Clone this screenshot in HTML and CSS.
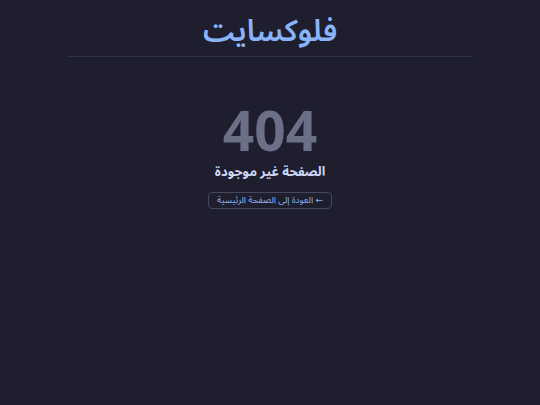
FILE: index.html
```html
<!DOCTYPE html>
<html lang="ar" dir="rtl">
<head>
<meta charset="utf-8">
<title>404</title>
<link rel="stylesheet" href="styles.css">
</head>
<body>
<div class="wrap">
  <header class="header">
    <a class="logo" href="#">فلوكسايت</a>
  </header>
  <main class="notfound">
    <div class="code">404</div>
    <h1 class="title">الصفحة غير موجودة</h1>
    <a class="back" href="#"><span class="arrow">←</span> العودة إلى الصفحة الرئيسية</a>
  </main>
</div>
</body>
</html>
```
FILE: styles.css
```css
html, body {
  margin: 0;
  padding: 0;
  background: #1e1e2e;
  color: #cdd6f4;
  font-family: "Noto Sans Arabic", "Noto Sans", sans-serif;
}
.wrap {
  width: 405px;
  margin: 0 auto;
}
.header {
  display: flex;
  justify-content: center;
  height: 57px;
  padding-top: 7px;
  border-bottom: 1px solid #313244;
  box-sizing: border-box;
}
.logo {
  display: block;
  color: #89b4fa;
  font-size: 30px;
  font-weight: 600;
  text-decoration: none;
  line-height: 50px;
  height: 49px;
}
.notfound {
  display: flex;
  flex-direction: column;
  align-items: center;
  padding-top: 51px;
}
.code {
  font-size: 55px;
  font-weight: 700;
  color: #6c7086;
  line-height: 52px;
}
.title {
  margin: 2px 0 0;
  font-size: 13px;
  font-weight: 700;
  color: #cdd6f4;
  line-height: 20px;
}
.back {
  margin-top: 10px;
  font-size: 9px;
  color: #8fb2f2;
  text-decoration: none;
  border: 1px solid #45475a;
  border-radius: 4px;
  padding: 0 8px;
  line-height: 15px;
}
.arrow {
  font-family: "DejaVu Sans", sans-serif;
  font-size: 9px;
}
```
